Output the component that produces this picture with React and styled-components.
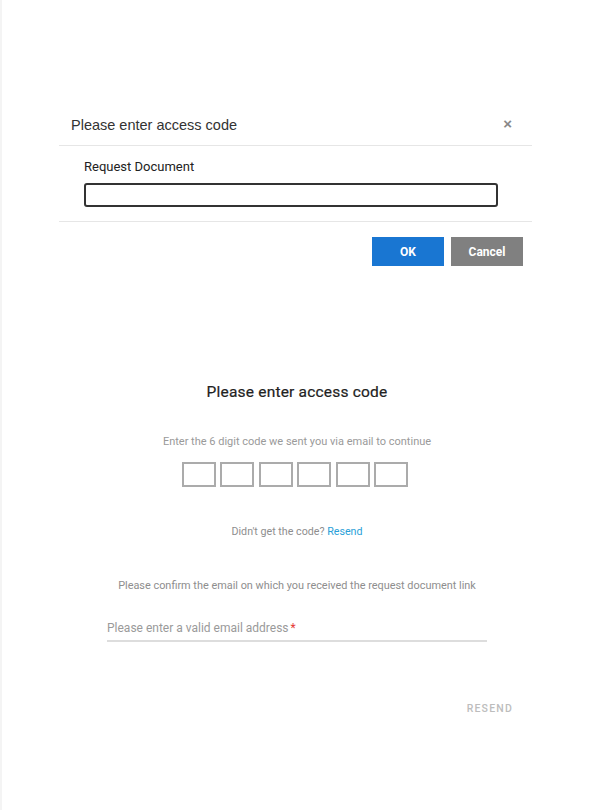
import styled, { createGlobalStyle } from "styled-components";

const GlobalStyle = createGlobalStyle`
  html, body {
    margin: 0;
    padding: 0;
    background: #ffffff;
  }
  body {
    font-family: Roboto, "Liberation Sans", sans-serif;
  }
`;

const App = () => {
  return (
    <>
      <GlobalStyle />
      <Page>
        <Modal>
          <ModalHeader>
            <ModalTitle>Please enter access code</ModalTitle>
            <CloseButton>×</CloseButton>
          </ModalHeader>
          <ModalBody>
            <FieldLabel>Request Document</FieldLabel>
            <TextInput />
          </ModalBody>
          <ModalFooter>
            <ActionButton variant="primary">OK</ActionButton>
            <ActionButton variant="secondary">Cancel</ActionButton>
          </ModalFooter>
        </Modal>

        <CodeCard>
          <CodeTitle>Please enter access code</CodeTitle>
          <HintText>Enter the 6 digit code we sent you via email to continue</HintText>
          <DigitRow>
            {[0, 1, 2, 3, 4, 5].map((i) => (
              <DigitBox key={i} />
            ))}
          </DigitRow>
          <ResendLine>
            Didn't get the code? <ResendLink>Resend</ResendLink>
          </ResendLine>
          <ConfirmText>
            Please confirm the email on which you received the request document link
          </ConfirmText>
          <EmailField>
            <EmailPlaceholder>
              Please enter a valid email address<Required>*</Required>
            </EmailPlaceholder>
          </EmailField>
          <CardActions>
            <TextButton>RESEND</TextButton>
          </CardActions>
        </CodeCard>
      </Page>
    </>
  );
};

const Page = styled.div`
  min-height: 810px;
  box-sizing: border-box;
  border-left: 2px solid #f4f4f4;
  display: flex;
  flex-direction: column;
  padding-top: 105px;
`;

const Modal = styled.div`
  margin-left: 57px;
  width: 473px;
  display: flex;
  flex-direction: column;
`;

const ModalHeader = styled.div`
  display: flex;
  align-items: center;
  justify-content: space-between;
  height: 40px;
  padding: 0 20px 0 12px;
  border-bottom: 1px solid #e6e6e6;
`;

const ModalTitle = styled.h4`
  margin: 0;
  font-family: "Liberation Sans", Arial, sans-serif;
  font-size: 14.5px;
  font-weight: 400;
  color: #333333;
`;

const CloseButton = styled.span`
  font-family: "Liberation Sans", Arial, sans-serif;
  font-size: 15px;
  font-weight: 700;
  color: #888888;
  line-height: 1;
  margin-top: -3px;
`;

const ModalBody = styled.div`
  display: flex;
  flex-direction: column;
  padding: 13px 34px 14px 25px;
  border-bottom: 1px solid #e6e6e6;
`;

const FieldLabel = styled.label`
  font-size: 13px;
  color: #222222;
  line-height: 16px;
  margin-bottom: 8px;
`;

const TextInput = styled.div`
  height: 20px;
  border: 2px solid #333333;
  border-radius: 3px;
`;

const ModalFooter = styled.div`
  display: flex;
  justify-content: flex-end;
  gap: 7px;
  padding: 15px 9px 0 0;
`;

const ActionButton = styled.button`
  width: 72px;
  height: 29px;
  border: none;
  border-radius: 0;
  font-family: Roboto, sans-serif;
  font-size: 12px;
  font-weight: 700;
  color: #ffffff;
  background: ${(props) => (props.variant === "primary" ? "#1976d2" : "#808080")};
`;

const CodeCard = styled.div`
  margin: 116px 0 0 79px;
  width: 432px;
  box-sizing: border-box;
  padding: 0 26px;
  display: flex;
  flex-direction: column;
  align-items: center;
`;

const CodeTitle = styled.h3`
  margin: 0;
  font-size: 15.5px;
  font-weight: 400;
  color: #222222;
  line-height: 20px;
  letter-spacing: 0.2px;
  -webkit-text-stroke: 0.2px #222222;
`;

const HintText = styled.p`
  margin: 33px 0 0;
  font-size: 11px;
  color: #9a9a9a;
  line-height: 14px;
`;

const DigitRow = styled.div`
  display: flex;
  gap: 4.4px;
  margin: 13px 4px 0 0;
`;

const DigitBox = styled.div`
  width: 30px;
  height: 21px;
  border: 2px solid #ababab;
`;

const ResendLine = styled.p`
  margin: 38px 0 0;
  font-size: 10.7px;
  color: #8e8e8e;
  line-height: 14px;
`;

const ResendLink = styled.span`
  color: #2a9fd8;
`;

const ConfirmText = styled.p`
  margin: 40px 0 0;
  font-size: 10.9px;
  color: #8e8e8e;
  line-height: 14px;
`;

const EmailField = styled.div`
  align-self: stretch;
  margin-top: 24px;
  padding-bottom: 4px;
  border-bottom: 2px solid #dddddd;
`;

const EmailPlaceholder = styled.span`
  font-size: 12px;
  color: #9a9a9a;
  line-height: 16px;
`;

const Required = styled.span`
  color: #e53935;
  margin-left: 2px;
`;

const CardActions = styled.div`
  align-self: stretch;
  display: flex;
  justify-content: flex-end;
  margin: 60px -26px 0 0;
`;

const TextButton = styled.span`
  font-size: 10.5px;
  font-weight: 500;
  letter-spacing: 1.2px;
  color: #bdbdbd;
`;

export default App;
